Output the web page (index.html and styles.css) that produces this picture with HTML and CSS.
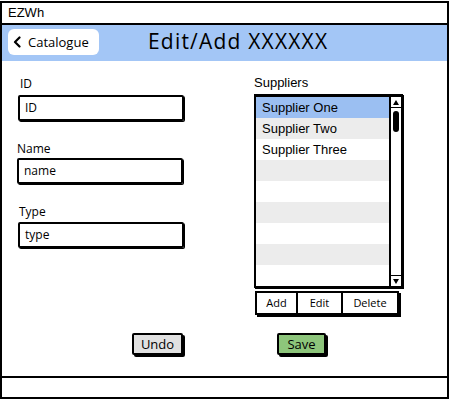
FILE: index.html
```html
<!DOCTYPE html>
<html lang="en">
<head>
<meta charset="utf-8">
<title>EZWh - Edit/Add</title>
<link rel="stylesheet" href="styles.css">
</head>
<body>
<div class="frame">
  <div class="titlebar">EZWh</div>
  <div class="header">
    <button class="back">
      <svg class="chev" width="8" height="12" viewBox="0 0 8 12"><path d="M6.5 1.5 L2 6 L6.5 10.5" fill="none" stroke="#000" stroke-width="2.2" stroke-linecap="round" stroke-linejoin="round"/></svg>
      <span>Catalogue</span>
    </button>
    <h1 class="title">Edit/Add XXXXXX</h1>
  </div>
  <div class="content">
    <div class="columns">
      <div class="form">
        <div class="field">
          <label class="label label-id">ID</label>
          <div class="input input-id">ID</div>
        </div>
        <div class="field field-gap">
          <label class="label label-name">Name</label>
          <div class="input input-name">name</div>
        </div>
        <div class="field field-gap">
          <label class="label label-type">Type</label>
          <div class="input input-type">type</div>
        </div>
      </div>
      <div class="suppliers">
        <div class="list-label">Suppliers</div>
        <div class="listbox">
          <ul class="rows">
            <li class="row sel">Supplier One</li>
            <li class="row alt">Supplier Two</li>
            <li class="row">Supplier Three</li>
            <li class="row alt"></li>
            <li class="row"></li>
            <li class="row alt"></li>
            <li class="row"></li>
            <li class="row alt"></li>
            <li class="row"></li>
          </ul>
          <div class="scrollbar">
            <div class="arrow arrow-up"><span class="tri tri-up"></span></div>
            <div class="track"><div class="thumb"></div></div>
            <div class="arrow arrow-down"><span class="tri tri-down"></span></div>
          </div>
        </div>
        <div class="btn-group">
          <button class="gbtn gbtn-add">Add</button>
          <button class="gbtn gbtn-edit">Edit</button>
          <button class="gbtn gbtn-del">Delete</button>
        </div>
      </div>
    </div>
    <div class="actions">
      <button class="act undo">Undo</button>
      <button class="act save">Save</button>
    </div>
  </div>
  <div class="footer"></div>
</div>
</body>
</html>
```

FILE: styles.css
```css
* { box-sizing: border-box; }

html, body {
  margin: 0;
  padding: 0;
  background: #fff;
}

body {
  font-family: "Open Sans", "Liberation Sans", sans-serif;
  font-weight: 500;
  color: #000;
}

button {
  font-family: inherit;
  font-weight: inherit;
  color: #000;
  padding: 0;
  margin: 0;
  cursor: pointer;
}

.frame {
  margin-top: 1px;
  width: 449px;
  height: 398px;
  border: 2px solid #000;
  display: flex;
  flex-direction: column;
  overflow: hidden;
}

.titlebar {
  height: 22px;
  border-bottom: 2px solid #000;
  padding-left: 6px;
  font-family: "Liberation Sans", Arial, sans-serif;
  font-weight: 400;
  font-size: 13px;
  line-height: 20px;
}

.header {
  height: 36px;
  background: #a3c6f6;
  display: flex;
  align-items: flex-start;
  padding-left: 6px;
}

.back {
  margin-top: 4px;
  width: 91px;
  height: 26px;
  background: #fff;
  border: none;
  border-radius: 6px;
  display: flex;
  align-items: center;
  padding-left: 5px;
  font-size: 13px;
}

.chev {
  display: block;
  margin-right: 7px;
}

.title {
  margin: 1px 0 0 49px;
  font-size: 21px;
  font-weight: 500;
  letter-spacing: 1.2px;
  line-height: 30px;
}

.content {
  height: 315px;
  display: flex;
  flex-direction: column;
}

.columns {
  display: flex;
}

.form {
  width: 252px;
  padding: 15px 0 0 16px;
}

.field-gap {
  margin-top: 20px;
}

.label {
  display: block;
  font-size: 12px;
  line-height: 16px;
}

.label-id { margin-left: 2px; }
.label-name { margin-left: -1px; }
.label-type { margin-left: 1px; }

.input {
  width: 166px;
  height: 26px;
  border: 2px solid #000;
  border-radius: 2px;
  box-shadow: 1px 1px 0 #000;
  font-size: 12px;
  line-height: 22px;
  padding-left: 5px;
}

.input-id { margin-top: 3px; }
.input-name { margin-top: 1px; margin-left: -1px; }
.input-type { margin-top: 2px; }

.suppliers {
  padding-top: 14px;
}

.list-label {
  font-family: "Liberation Sans", Arial, sans-serif;
  font-weight: 400;
  font-size: 13px;
  line-height: 16px;
}

.listbox {
  margin-top: 3px;
  width: 149px;
  display: flex;
  border: 2px solid #000;
  border-top-width: 3px;
  box-shadow: 1px 1px 0 #000;
}

.rows {
  list-style: none;
  margin: 0;
  padding: 0;
  width: 133px;
}

.row {
  height: 21px;
  padding-left: 6px;
  font-family: "Liberation Sans", Arial, sans-serif;
  font-weight: 400;
  font-size: 13px;
  line-height: 21px;
  background: #fff;
}

.row.alt { background: #ececec; }
.row.sel { background: #9bbff2; }

.scrollbar {
  width: 12px;
  border-left: 2px solid #000;
  display: flex;
  flex-direction: column;
}

.arrow {
  height: 11px;
  display: flex;
  align-items: center;
  justify-content: center;
}

.arrow-up { border-bottom: 1px solid #000; }
.arrow-down { border-top: 1px solid #000; }

.tri {
  width: 0;
  height: 0;
  border-left: 3.5px solid transparent;
  border-right: 3.5px solid transparent;
}

.tri-up { border-bottom: 5px solid #000; }
.tri-down { border-top: 5px solid #000; }

.track {
  flex: 1;
  padding-top: 3px;
  display: flex;
  justify-content: center;
}

.thumb {
  width: 6px;
  height: 21px;
  background: #000;
  border-radius: 3px;
}

.btn-group {
  margin: 3px 0 0 1px;
  display: flex;
  width: 144px;
  height: 24px;
  border: 2px solid #000;
  box-shadow: 2px 2px 0 #000;
}

.gbtn {
  height: 20px;
  background: #fff;
  border: none;
  font-size: 11px;
  line-height: 20px;
  text-align: center;
}

.gbtn-add { width: 41px; border-right: 2px solid #000; }
.gbtn-edit { width: 45px; border-right: 2px solid #000; }
.gbtn-del { flex: 1; }

.actions {
  margin-top: 18px;
  padding-left: 130px;
  display: flex;
  gap: 94px;
}

.act {
  height: 22px;
  border: 2px solid #000;
  border-radius: 2px;
  box-shadow: 2px 2px 0 #000;
  font-size: 13px;
  line-height: 18px;
  text-align: center;
}

.undo { width: 51px; background: #e1e1e1; }
.save { width: 49px; background: #8dc57b; }

.footer {
  height: 21px;
  border-top: 2px solid #000;
}
```
